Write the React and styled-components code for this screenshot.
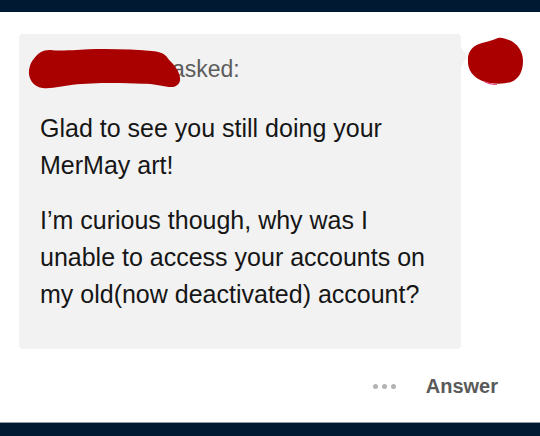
import React from "react";
import styled, { createGlobalStyle } from "styled-components";

const GlobalStyle = createGlobalStyle`
  html, body {
    margin: 0;
    padding: 0;
    background: #fff;
  }
  body {
    font-family: "Liberation Sans", Arial, sans-serif;
  }
`;

function App() {
  return (
    <Page>
      <GlobalStyle />
      <TopBar />
      <Content>
        <AskRow>
          <Bubble>
            <Asker>
              <AskedLabel>asked:</AskedLabel>
              <NameScribble viewBox="0 0 150 40" preserveAspectRatio="none" aria-hidden="true">
                <path
                  d="M6 11 C 10 5, 16 2, 24 3 C 30 4, 34 3, 44 3 C 70 1, 100 2, 124 4 C 132 5, 136 8, 138 12 C 142 16, 148 22, 149 29 C 150 35, 145 39, 138 38 C 130 37, 124 35, 112 35 C 90 34, 62 34, 44 36 C 34 37, 24 40, 14 39 C 5 38, 0 30, 1 22 C 2 17, 3 14, 6 11 Z"
                  fill="#a90000"
                />
              </NameScribble>
            </Asker>
            <Question>Glad to see you still doing your MerMay art!</Question>
            <Question>
              I’m curious though, why was I unable to access your accounts on my
              old(now deactivated) account?
            </Question>
          </Bubble>
          <AvatarScribble viewBox="0 0 56 48" aria-hidden="true">
            <path
              d="M1 24 C 0 15, 6 8, 15 6 C 22 4, 27 3, 31 1 C 35 0, 38 2, 42 3 C 50 6, 56 14, 56 24 C 56 34, 52 42, 44 45 C 38 47, 30 47, 22 46 C 12 44, 4 38, 2 31 C 1 28, 1 26, 1 24 Z"
              fill="#ab0000"
            />
            <path d="M18 45 C 22 47, 26 47.5, 30 47.5" stroke="#e6508a" strokeWidth="1.2" fill="none" />
          </AvatarScribble>
        </AskRow>
        <Actions>
          <MoreDots aria-label="more">
            <Dot />
            <Dot />
            <Dot />
          </MoreDots>
          <AnswerButton>Answer</AnswerButton>
        </Actions>
      </Content>
      <BottomBar />
    </Page>
  );
}

const Page = styled.div`
  display: flex;
  flex-direction: column;
  height: 100vh;
  overflow: hidden;
`;

const TopBar = styled.div`
  height: 12px;
  flex-shrink: 0;
  background: #001933;
`;

const BottomBar = styled.div`
  height: 13px;
  flex-shrink: 0;
  margin-top: auto;
  background: #001933;
  border-top: 1px solid #8d9aa6;
`;

const Content = styled.div`
  padding: 22px 17px 0 19px;
`;

const AskRow = styled.div`
  display: flex;
  align-items: flex-start;
  gap: 6px;
`;

const Bubble = styled.div`
  position: relative;
  width: 442px;
  flex-shrink: 0;
  box-sizing: border-box;
  padding: 21px 20px 36px 21px;
  background: #f2f2f2;
  border-radius: 4px;

  &::after {
    content: "";
    position: absolute;
    right: -6px;
    top: 13px;
    border-style: solid;
    border-width: 10px 0 10px 6px;
    border-color: transparent transparent transparent #f2f2f2;
  }
`;

const Asker = styled.div`
  position: relative;
  display: flex;
  align-items: center;
  height: 28px;
  padding-left: 132px;
  margin-bottom: 27px;
`;

const NameScribble = styled.svg`
  position: absolute;
  left: -12px;
  top: -8px;
  width: 153px;
  height: 42px;
`;

const AskedLabel = styled.span`
  font-size: 23px;
  color: #5c5c5c;
`;

const Question = styled.p`
  margin: 0 0 18px;
  font-size: 25px;
  line-height: 37px;
  color: #161616;

  &:last-child {
    margin-bottom: 0;
  }
`;

const AvatarScribble = styled.svg`
  width: 56px;
  height: 48px;
  margin-top: 3px;
  flex-shrink: 0;
`;

const Actions = styled.div`
  display: flex;
  align-items: center;
  justify-content: flex-end;
  gap: 30px;
  width: 479px;
  height: 40px;
  margin-top: 17px;
`;

const MoreDots = styled.div`
  display: flex;
  gap: 4px;
`;

const Dot = styled.span`
  width: 5px;
  height: 5px;
  border-radius: 50%;
  background: #b3b3b3;
`;

const AnswerButton = styled.span`
  font-size: 20px;
  font-weight: 700;
  color: #5a5a5a;
`;

export default App;
